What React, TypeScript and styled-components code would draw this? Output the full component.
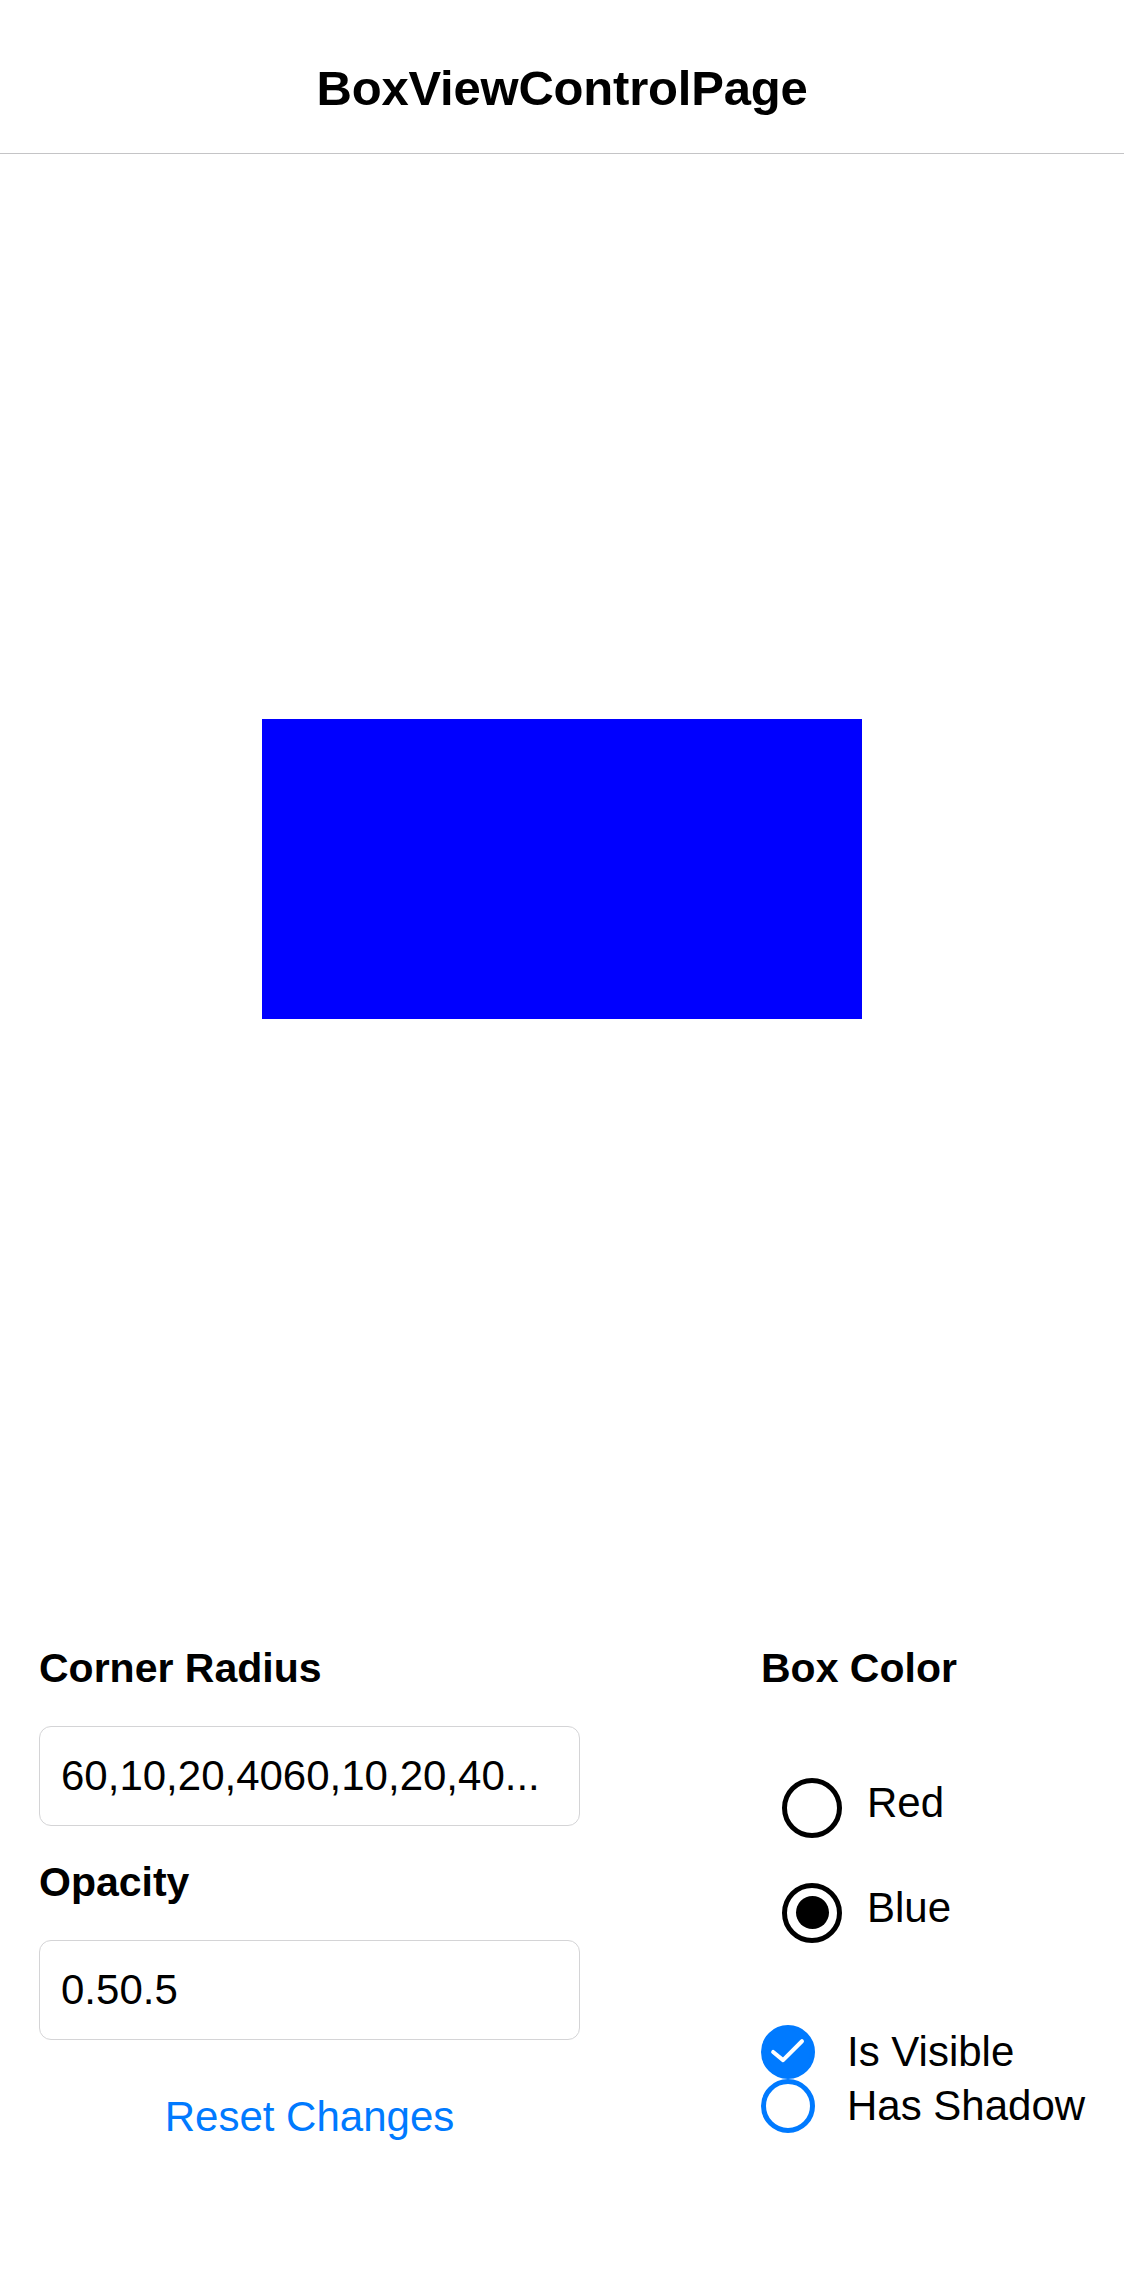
import React from 'react';
import styled, { createGlobalStyle } from 'styled-components';

const GlobalStyle = createGlobalStyle`
  html, body {
    margin: 0;
    padding: 0;
    background: #ffffff;
  }

  body {
    font-family: "Liberation Sans", Arial, sans-serif;
    color: #000000;
  }
`;

const Page = styled.div`
  width: 1124px;
  min-height: 2286px;
  display: flex;
  flex-direction: column;
  background: #ffffff;
`;

const Header = styled.header`
  height: 89px;
  padding-top: 64px;
  border-bottom: 1px solid #c4c4c6;
  display: flex;
  justify-content: center;
  align-items: flex-start;
`;

const Title = styled.h1`
  margin: 0;
  font-size: 49px;
  line-height: 49px;
  font-weight: 700;
  letter-spacing: -0.2px;
`;

const Preview = styled.main`
  height: 1430px;
  display: flex;
  align-items: center;
  justify-content: center;
`;

const Box = styled.div<{ $color: string }>`
  width: 600px;
  height: 300px;
  background: ${(p) => p.$color};
`;

const Controls = styled.section`
  display: grid;
  grid-template-columns: 541px 1fr;
  column-gap: 181px;
  padding: 64px 0 0 39px;
`;

const Column = styled.div`
  display: flex;
  flex-direction: column;
`;

const Label = styled.div`
  font-size: 41px;
  line-height: 41px;
  font-weight: 700;
  margin-bottom: 37px;
`;

const Field = styled.input`
  box-sizing: border-box;
  width: 100%;
  height: 100px;
  margin: 0 0 36px;
  padding: 0 20px 0 21px;
  border: 1px solid #d4d4d6;
  border-radius: 12px;
  font-family: "Liberation Sans", Arial, sans-serif;
  font-size: 42px;
  color: #000000;
  background: #ffffff;
  outline: none;
  text-overflow: ellipsis;
`;

const LinkButton = styled.button`
  align-self: center;
  margin-top: 20px;
  padding: 0;
  border: none;
  background: none;
  font-family: "Liberation Sans", Arial, sans-serif;
  font-size: 42px;
  line-height: 42px;
  color: #007aff;
  cursor: pointer;
`;

const RadioGroup = styled.div`
  display: flex;
  flex-direction: column;
  padding-left: 21px;
  margin-top: 29px;
`;

const RadioRow = styled.label`
  height: 105px;
  display: flex;
  align-items: center;
  gap: 25px;
  font-size: 42px;
`;

const RadioText = styled.span`
  margin-bottom: 10px;
`;

const RadioCircle = styled.span<{ $checked: boolean }>`
  box-sizing: border-box;
  width: 60px;
  height: 60px;
  border: 5px solid #000000;
  border-radius: 50%;
  display: flex;
  align-items: center;
  justify-content: center;

  &::after {
    content: '';
    width: 33px;
    height: 33px;
    border-radius: 50%;
    background: #000000;
    display: ${(p) => (p.$checked ? 'block' : 'none')};
  }
`;

const CheckList = styled.div`
  display: flex;
  flex-direction: column;
  margin-top: 60px;
`;

const CheckRow = styled.label`
  height: 54px;
  display: flex;
  align-items: center;
  gap: 32px;
  font-size: 42px;
`;

const CheckCircle = styled.span<{ $checked: boolean }>`
  box-sizing: border-box;
  width: 54px;
  height: 54px;
  border-radius: 50%;
  border: 5px solid #007aff;
  background: ${(p) => (p.$checked ? '#007aff' : '#ffffff')};
  display: flex;
  align-items: center;
  justify-content: center;

  svg {
    width: 54px;
    height: 54px;
    flex: none;
  }
`;

const colors = [
  { name: 'Red', checked: false },
  { name: 'Blue', checked: true },
];

const toggles = [
  { name: 'Is Visible', checked: true },
  { name: 'Has Shadow', checked: false },
];

function App() {
  return (
    <Page>
      <GlobalStyle />
      <Header>
        <Title>BoxViewControlPage</Title>
      </Header>
      <Preview>
        <Box $color="#0000ff" />
      </Preview>
      <Controls>
        <Column>
          <Label>Corner Radius</Label>
          <Field readOnly value="60,10,20,4060,10,20,40..." />
          <Label>Opacity</Label>
          <Field readOnly value="0.50.5" />
          <LinkButton type="button">Reset Changes</LinkButton>
        </Column>
        <Column>
          <Label>Box Color</Label>
          <RadioGroup>
            {colors.map((c) => (
              <RadioRow key={c.name}>
                <RadioCircle $checked={c.checked} />
                <RadioText>{c.name}</RadioText>
              </RadioRow>
            ))}
          </RadioGroup>
          <CheckList>
            {toggles.map((t) => (
              <CheckRow key={t.name}>
                <CheckCircle $checked={t.checked}>
                  {t.checked && (
                    <svg viewBox="0 0 24 24" fill="none">
                      <path
                        d="M5.4 12 L9.8 15.6 L18.2 7.2"
                        stroke="#ffffff"
                        strokeWidth="1.8"
                        strokeLinecap="round"
                        strokeLinejoin="round"
                      />
                    </svg>
                  )}
                </CheckCircle>
                {t.name}
              </CheckRow>
            ))}
          </CheckList>
        </Column>
      </Controls>
    </Page>
  );
}

export default App;
